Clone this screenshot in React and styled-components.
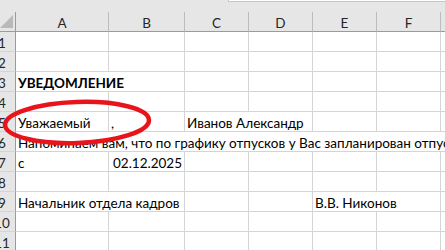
import React from 'react';
import styled, { createGlobalStyle } from 'styled-components';

const GlobalStyle = createGlobalStyle`
    body {
        margin: 0;
        overflow: hidden;
        background: #ffffff;
        font-family: "Lato", "Liberation Sans", sans-serif;
    }
`;

const COLUMNS = ['A', 'B', 'C', 'D', 'E', 'F', ''];

// each row: list of cells, span covers cells the text flows over
const ROWS = [
    [],
    [],
    [{ text: 'УВЕДОМЛЕНИЕ', span: 2, bold: true }],
    [],
    [{ text: 'Уважаемый' }, { text: ',' }, { text: 'Иванов Александр', span: 2 }],
    [{ text: 'Напоминаем вам, что по графику отпусков у Вас запланирован отпуск', span: 7 }],
    [{ text: 'с' }, { text: '02.12.2025', right: true }],
    [],
    [{ text: 'Начальник отдела кадров', span: 2 }, {}, {}, { text: 'В.В. Никонов', span: 2 }],
    [],
    [],
];

const Sheet = styled.div`
    margin-left: -11px;
    width: 456px;
`;

const TopStrip = styled.div`
    height: 12px;
    background: #e6e6e6;
    display: flex;
    justify-content: flex-end;
`;

const NameBox = styled.div`
    width: 216px;
    height: 1px;
    background: #ffffff;
    border-left: 1px solid #c6c6c6;
    border-bottom: 1px solid #c6c6c6;
`;

const Grid = styled.div`
    display: grid;
    grid-template-columns: 27px 93px 76px 64px 64px 64px 64px 1fr;
    grid-auto-rows: 20px;
    font-size: 13.5px;
    color: #000000;
`;

const Corner = styled.div`
    box-sizing: border-box;
    background: #e6e6e6;
    border-right: 1px solid #9b9b9b;
    border-bottom: 1px solid #9b9b9b;
    display: flex;
    justify-content: flex-end;
    align-items: flex-end;
    padding: 0 2px 3px 0;
`;

const SelectAll = styled.div`
    width: 13px;
    height: 13px;
    background: #b9b9b9;
    clip-path: polygon(100% 0, 100% 100%, 0 100%);
`;

const ColHead = styled.div`
    box-sizing: border-box;
    background: #e6e6e6;
    border-right: 1px solid #bcbcbc;
    border-bottom: 1px solid #9b9b9b;
    text-align: center;
    line-height: 16px;
    padding-top: 3px;
    color: #262626;
`;

const RowHead = styled.div`
    box-sizing: border-box;
    background: #e6e6e6;
    border-right: 1px solid #9b9b9b;
    border-bottom: 1px solid #d4d4d4;
    text-align: center;
    line-height: 16px;
    padding-top: 3px;
    color: #262626;
`;

const Cell = styled.div`
    box-sizing: border-box;
    grid-column: span ${p => p.$span || 1};
    border-right: 1px solid #d4d4d4;
    border-bottom: 1px solid #d4d4d4;
    padding: 3px 2px 0 2px;
    line-height: 16px;
    white-space: nowrap;
    overflow: hidden;
    text-align: ${p => (p.$right ? 'right' : 'left')};
    font-weight: ${p => (p.$bold ? 700 : 400)};
`;

const Marker = styled.svg`
    position: absolute;
    left: 0;
    top: 0;
    pointer-events: none;
`;

const renderRow = (cells, index) => {
    const out = [<RowHead key={`h${index}`}>{index + 1}</RowHead>];
    let used = 0;
    cells.forEach((c, i) => {
        out.push(
            <Cell key={`${index}-${i}`} $span={c.span} $right={c.right} $bold={c.bold}>
                {c.text}
            </Cell>
        );
        used += c.span || 1;
    });
    for (let i = used; i < COLUMNS.length; i++) {
        out.push(<Cell key={`${index}-e${i}`} />);
    }
    return out;
};

const App = () => {
    return (
        <>
            <GlobalStyle />
            <Sheet>
                <TopStrip><NameBox /></TopStrip>
                <Grid>
                    <Corner><SelectAll /></Corner>
                    {COLUMNS.map((c, i) => <ColHead key={i}>{c}</ColHead>)}
                    {ROWS.map(renderRow)}
                </Grid>
            </Sheet>
            {/* red hand-drawn ring around the greeting */}
            <Marker width="445" height="250" viewBox="0 0 445 250">
                <ellipse
                    cx="77"
                    cy="122.5"
                    rx="72"
                    ry="20.5"
                    fill="none"
                    stroke="#e8141c"
                    strokeWidth="4.5"
                    transform="rotate(-2 77 122.5)"
                />
            </Marker>
        </>
    );
};

export default App;
